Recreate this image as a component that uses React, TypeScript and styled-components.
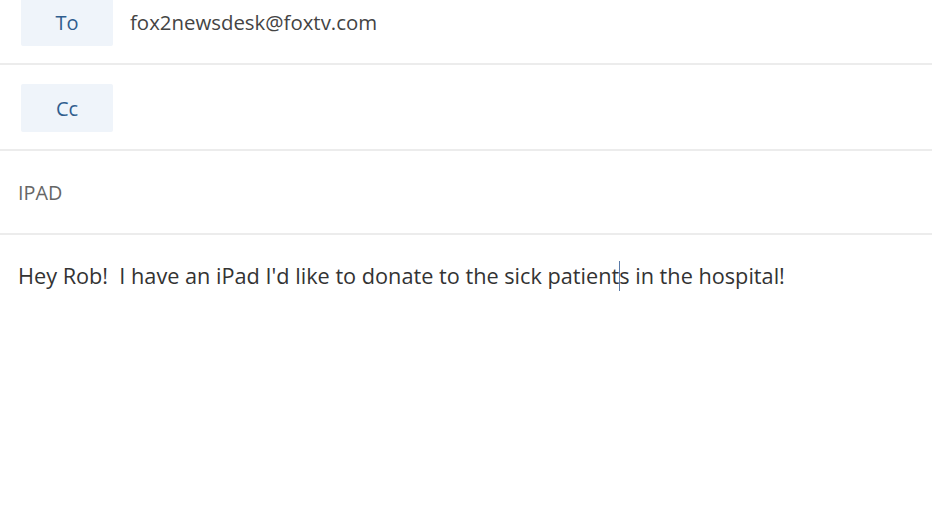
import styled, { createGlobalStyle } from "styled-components";

const GlobalStyle = createGlobalStyle`
  html, body {
    margin: 0;
    padding: 0;
    background: #ffffff;
  }
  body {
    font-family: "Open Sans", "Noto Sans", sans-serif;
    overflow: hidden;
  }
`;

const Compose = styled.div`
  width: 932px;
  height: 524px;
  display: flex;
  flex-direction: column;
  margin-top: -21px;
`;

const FieldRow = styled.div`
  display: flex;
  align-items: center;
  gap: 17px;
  box-sizing: border-box;
  height: 86px;
  padding: 2px 21px 0;
  border-bottom: 2px solid #ececec;
`;

const RecipientButton = styled.button`
  width: 92px;
  height: 48px;
  border: none;
  border-radius: 2px;
  background: #eff4fa;
  color: #2f5d8e;
  font-family: "Open Sans", "Noto Sans", sans-serif;
  font-size: 20px;
  padding: 0;
  line-height: 50px;
`;

const Address = styled.span`
  font-size: 20.4px;
  color: #444444;
`;

const SubjectRow = styled.div`
  display: flex;
  align-items: center;
  height: 82px;
  padding: 0 18px;
  border-bottom: 2px solid #ececec;
  font-size: 19.8px;
  color: #666666;
`;

const Body = styled.div`
  padding: 26px 18px 0;
  font-size: 21.7px;
  color: #333333;
  white-space: pre;
`;

const Caret = styled.span`
  display: inline-block;
  width: 1px;
  height: 30px;
  margin: 0 -1px -7px 0;
  background: #5a7aa8;
`;

export default function App() {
  return (
    <>
      <GlobalStyle />
      <Compose>
        <FieldRow>
          <RecipientButton>To</RecipientButton>
          <Address>fox2newsdesk@foxtv.com</Address>
        </FieldRow>
        <FieldRow>
          <RecipientButton>Cc</RecipientButton>
        </FieldRow>
        <SubjectRow>IPAD</SubjectRow>
        <Body>
          {"Hey Rob!  I have an iPad I'd like to donate to the sick patient"}
          <Caret />
          {"s in the hospital!"}
        </Body>
      </Compose>
    </>
  );
}
